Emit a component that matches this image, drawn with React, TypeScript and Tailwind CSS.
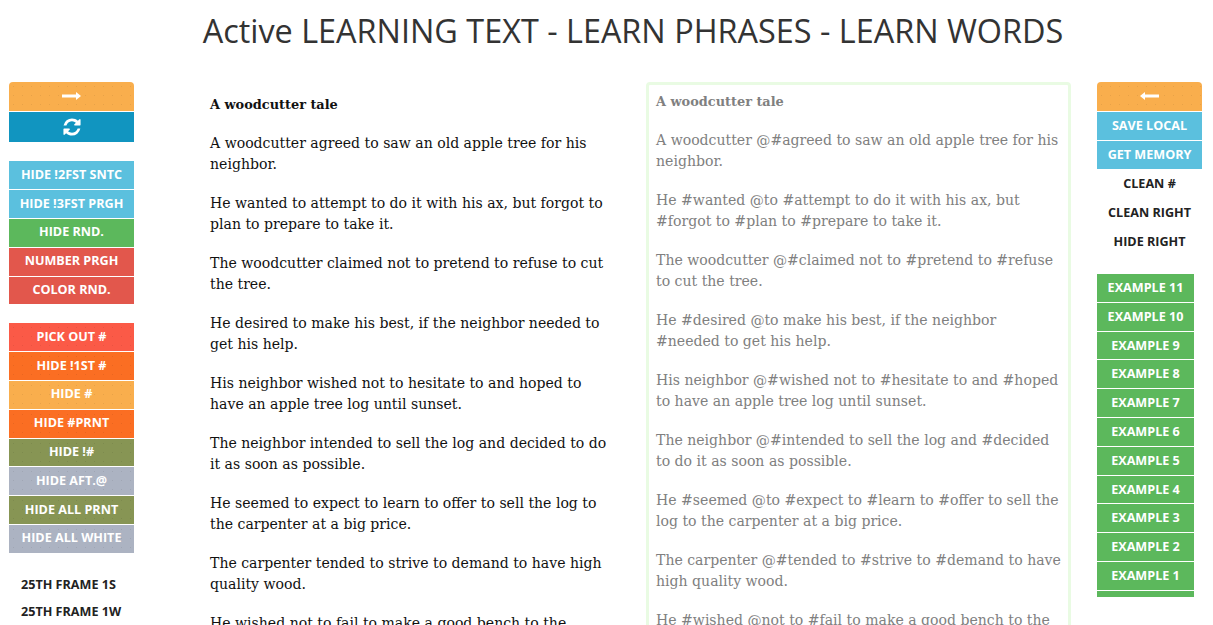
const btn =
  "flex h-[27.8px] mb-[1px] items-center justify-center text-[12.6px] font-bold text-white";

const dots =
  "bg-[radial-gradient(rgba(0,0,0,0.07)_0.6px,transparent_0.8px)] bg-[length:9px_9px]";

const groupOne = [
  { label: "HIDE !2FST SNTC", color: "bg-[#5bc0de]" },
  { label: "HIDE !3FST PRGH", color: "bg-[#5bc0de]" },
  { label: "HIDE RND.", color: "bg-[#5cb85c]" },
  { label: "NUMBER PRGH", color: "bg-[#e2574c]" },
  { label: "COLOR RND.", color: "bg-[#e2574c]" },
];

const groupTwo = [
  { label: "PICK OUT #", color: "bg-[#fb5a47]" },
  { label: "HIDE !1ST #", color: "bg-[#fb6e23]" },
  { label: "HIDE #", color: "bg-[#f9ae4d]" },
  { label: "HIDE #PRNT", color: "bg-[#fb6e23]" },
  { label: "HIDE !#", color: "bg-[#879554]" },
  { label: "HIDE AFT.@", color: "bg-[#acb3c2]" },
  { label: "HIDE ALL PRNT", color: "bg-[#879554]" },
  { label: "HIDE ALL WHITE", color: "bg-[#acb3c2]" },
];

const examples = ["11", "10", "9", "8", "7", "6", "5", "4", "3", "2", "1"];

const plain = [
  "A woodcutter agreed to saw an old apple tree for his neighbor.",
  "He wanted to attempt to do it with his ax, but forgot to plan to prepare to take it.",
  "The woodcutter claimed not to pretend to refuse to cut the tree.",
  "He desired to make his best, if the neighbor needed to get his help.",
  "His neighbor wished not to hesitate to and hoped to have an apple tree log until sunset.",
  "The neighbor intended to sell the log and decided to do it as soon as possible.",
  "He seemed to expect to learn to offer to sell the log to the carpenter at a big price.",
  "The carpenter tended to strive to demand to have high quality wood.",
  "He wished not to fail to make a good bench to the customer.",
];

const marked = [
  "A woodcutter @#agreed to saw an old apple tree for his neighbor.",
  "He #wanted @to #attempt to do it with his ax, but #forgot to #plan to #prepare to take it.",
  "The woodcutter @#claimed not to #pretend to #refuse to cut the tree.",
  "He #desired @to make his best, if the neighbor #needed to get his help.",
  "His neighbor @#wished not to #hesitate to and #hoped to have an apple tree log until sunset.",
  "The neighbor @#intended to sell the log and #decided to do it as soon as possible.",
  "He #seemed @to #expect to #learn to #offer to sell the log to the carpenter at a big price.",
  "The carpenter @#tended to #strive to #demand to have high quality wood.",
  "He #wished @not to #fail to make a good bench to the customer.",
];

function LongArrow({ flip }: { flip?: boolean }) {
  return (
    <svg width="19" height="8" viewBox="0 0 19 8" fill="white" className={flip ? "-scale-x-100" : ""}>
      <path d="M0 2.5H14V0L19 4L14 8V5.5H0Z" />
    </svg>
  );
}

function Refresh() {
  return (
    <svg width="20" height="20" viewBox="0 0 1792 1792" fill="white">
      <path d="M1639 1056q0 5-1 7-64 268-268 434.5t-478 166.5q-146 0-282.5-55t-243.5-157l-129 129q-19 19-45 19t-45-19-19-45v-448q0-26 19-45t45-19h448q26 0 45 19t19 45-19 45l-137 137q71 66 161 102t187 36q134 0 250-65t186-179q11-17 53-117 8-23 30-23h192q13 0 22.5 9.5t9.5 22.5zm25-800v448q0 26-19 45t-45 19h-448q-26 0-45-19t-19-45 19-45l138-138q-148-137-349-137-134 0-250 65t-186 179q-11 17-53 117-8 23-30 23h-199q-13 0-22.5-9.5t-9.5-22.5v-7q65-268 270-434.5t480-166.5q146 0 284 55.5t245 156.5l130-129q19-19 45-19t45 19 19 45z" />
    </svg>
  );
}

export default function App() {
  return (
    <div className="h-[625px] overflow-hidden bg-white font-['Open_Sans',sans-serif]">
      {/* Title */}
      <h1 className="h-[82px] pt-[9px] pl-[53px] text-center text-[32.4px] leading-[42px] font-normal text-[#333]">
        Active LEARNING TEXT - LEARN PHRASES - LEARN WORDS
      </h1>

      <div className="flex items-start">
        {/* Left buttons */}
        <div className="ml-[9px] w-[125px] shrink-0">
          <div className={`${dots} mb-px flex h-[29px] items-center justify-center rounded-t bg-[#f9ae4d] pb-[2px]`}>
            <LongArrow />
          </div>
          <div className="mb-[19.4px] flex h-[30px] items-center justify-center bg-[#1195c0]">
            <Refresh />
          </div>
          {groupOne.map((b) => (
            <div key={b.label} className={`${btn} ${b.color}`}>
              {b.label}
            </div>
          ))}
          <div className="h-[18px]" />
          {groupTwo.map((b) => (
            <div key={b.label} className={`${btn} ${dots} ${b.color}`}>
              {b.label}
            </div>
          ))}
          <div className="mt-[18px] pl-[12px] text-[12.6px] leading-[27px] font-bold text-[#222]">
            <div>25TH FRAME 1S</div>
            <div>25TH FRAME 1W</div>
          </div>
        </div>

        {/* Source text */}
        <div className="ml-[76px] w-[400px] shrink-0 pt-[12px] font-['DejaVu_Serif',serif] text-[14.07px] leading-[21px] text-[#111]">
          <p className="mb-[18px] text-[12.9px] font-bold">A woodcutter tale</p>
          {plain.map((t) => (
            <p key={t} className="mb-[18px]">
              {t}
            </p>
          ))}
        </div>

        {/* Result panel */}
        <div className="ml-[36px] w-[425px] shrink-0 rounded border-[3px] border-[#e9fbe3] px-[7px] pt-[6px] font-['DejaVu_Serif',serif] text-[14.07px] leading-[21px] text-[#808080]">
          <p className="mb-[18px] text-[12.9px] font-bold">A woodcutter tale</p>
          {marked.map((t) => (
            <p key={t} className="mb-[18px]">
              {t}
            </p>
          ))}
        </div>

        {/* Right buttons */}
        <div className="ml-[26px] w-[105px] shrink-0">
          <div className={`${dots} mb-px flex h-[29px] items-center justify-center rounded-t bg-[#f9ae4d] pb-[2px]`}>
            <LongArrow flip />
          </div>
          <div className={`${btn} bg-[#5bc0de] pt-[2px]`}>SAVE LOCAL</div>
          <div className={`${btn} bg-[#5bc0de] pt-[2px]`}>GET MEMORY</div>
          <div className="-mt-px text-center text-[12.6px] leading-[29px] font-bold text-[#222]">
            <div>CLEAN #</div>
            <div>CLEAN RIGHT</div>
            <div>HIDE RIGHT</div>
          </div>
          <div className="mt-[18.4px] w-[97px]">
            {examples.map((n) => (
              <div key={n} className={`${btn} first:rounded-t`}>
                <span className="flex h-full w-full items-center justify-center bg-[#5cb85c] pt-px">EXAMPLE {n}</span>
              </div>
            ))}
            <div className="h-[6px] bg-[#5cb85c]" />
          </div>
        </div>
      </div>
    </div>
  );
}
